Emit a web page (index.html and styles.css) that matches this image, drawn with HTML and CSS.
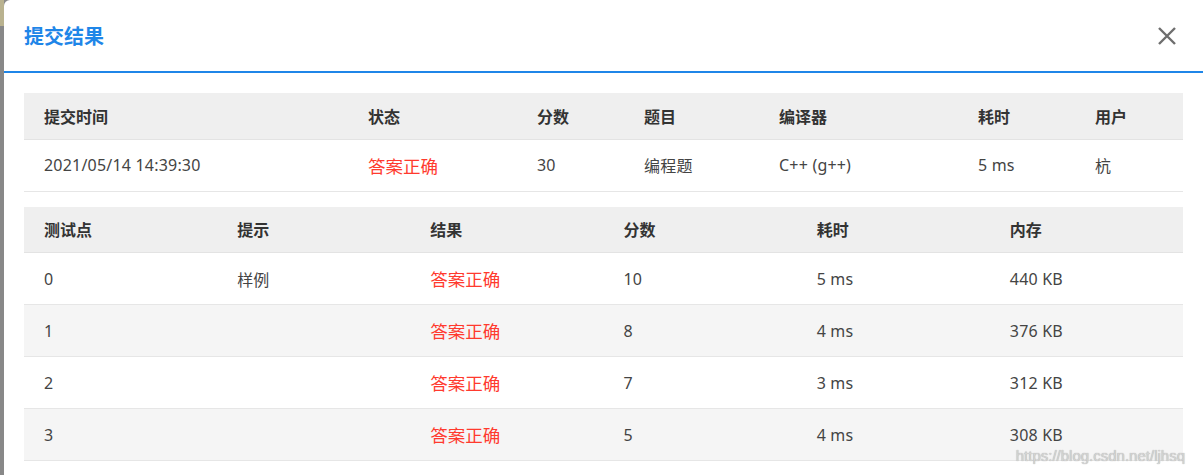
FILE: index.html
```html
<!DOCTYPE html>
<html lang="zh-CN">
<head>
<meta charset="utf-8">
<title>提交结果</title>
<link rel="stylesheet" href="styles.css">
</head>
<body>
<div class="page">
  <div class="backdrop"><div class="backdrop-corner"></div></div>
  <div class="modal">
    <div class="modal-header">
      <h2 class="modal-title">提交结果</h2>
      <button class="close-btn" aria-label="关闭">
        <svg width="20" height="20" viewBox="0 0 20 20"><path d="M2 2 L18 18 M18 2 L2 18" stroke="#6e6e6e" stroke-width="2.4" fill="none"/></svg>
      </button>
    </div>
    <div class="modal-body">
      <table class="tbl tbl-summary">
        <colgroup>
          <col style="width:324px"><col style="width:169px"><col style="width:107px"><col style="width:135px"><col style="width:199px"><col style="width:117px"><col>
        </colgroup>
        <thead>
          <tr><th>提交时间</th><th>状态</th><th>分数</th><th>题目</th><th>编译器</th><th>耗时</th><th>用户</th></tr>
        </thead>
        <tbody>
          <tr><td>2021/05/14 14:39:30</td><td class="ok">答案正确</td><td>30</td><td>编程题</td><td>C++ (g++)</td><td>5 ms</td><td>杭</td></tr>
        </tbody>
      </table>
      <table class="tbl tbl-cases">
        <thead>
          <tr><th>测试点</th><th>提示</th><th>结果</th><th>分数</th><th>耗时</th><th>内存</th></tr>
        </thead>
        <tbody>
          <tr><td>0</td><td>样例</td><td class="ok">答案正确</td><td>10</td><td>5 ms</td><td>440 KB</td></tr>
          <tr><td>1</td><td></td><td class="ok">答案正确</td><td>8</td><td>4 ms</td><td>376 KB</td></tr>
          <tr><td>2</td><td></td><td class="ok">答案正确</td><td>7</td><td>3 ms</td><td>312 KB</td></tr>
          <tr><td>3</td><td></td><td class="ok">答案正确</td><td>5</td><td>4 ms</td><td>308 KB</td></tr>
        </tbody>
      </table>
    </div>
    <div class="watermark">https://blog.csdn.net/ljhsq</div>
  </div>
</div>
</body>
</html>
```
FILE: styles.css
```css
* { box-sizing: border-box; }
html, body { margin: 0; padding: 0; }
body {
  width: 1203px;
  height: 475px;
  overflow: hidden;
  background: #8a8a8a;
  font-family: "Noto Sans", "Noto Sans CJK SC", sans-serif;
}
.page {
  display: flex;
  height: 475px;
}
.backdrop {
  width: 4px;
  flex: none;
  background: #888;
}
.backdrop-corner {
  height: 26px;
  background: #b9b28f;
}
.modal {
  position: relative;
  flex: 1;
  background: #fff;
  border-top-left-radius: 6px;
}
.modal-header {
  height: 73px;
  display: flex;
  align-items: center;
  justify-content: space-between;
  padding: 0 26px 0 20px;
  border-bottom: 2px solid #1f86e8;
}
.modal-title {
  margin: 0;
  font-family: "Noto Sans CJK SC", sans-serif;
  font-size: 20px;
  font-weight: 700;
  color: #1f86e8;
  line-height: 1;
}
.close-btn {
  border: 0;
  background: none;
  padding: 0;
  width: 20px;
  height: 20px;
  display: block;
}
.close-btn svg { display: block; }
.modal-body {
  padding: 20px 20px 0 20px;
}
.tbl {
  width: 100%;
  border-collapse: collapse;
  table-layout: fixed;
  font-size: 16px;
}
.tbl-summary { margin-bottom: 15px; }
.tbl th {
  height: 46px;
  padding: 0 20px;
  text-align: left;
  background: #efefef;
  color: #333;
  font-weight: 600;
  font-family: "Noto Sans CJK SC", sans-serif;
  border-bottom: 1px solid #e3e3e3;
}
.tbl td {
  height: 52px;
  padding: 0 20px;
  color: #444;
  border-bottom: 1px solid #e6e6e6;
  white-space: nowrap;
  letter-spacing: 0.2px;
}
.tbl-cases tbody tr:nth-child(even) td { background: #f5f5f5; }
.tbl td.ok {
  color: #ff3a2e;
  font-size: 17.5px;
  font-family: "Noto Sans CJK SC", sans-serif;
  font-weight: 400;
  letter-spacing: 0;
}
.watermark {
  position: absolute;
  right: 18px;
  bottom: 11px;
  font-family: "Liberation Sans", Arial, sans-serif;
  font-size: 15px;
  color: #d4d4d4;
  text-shadow: 0 0 1px #9a9a9a;
}
```
